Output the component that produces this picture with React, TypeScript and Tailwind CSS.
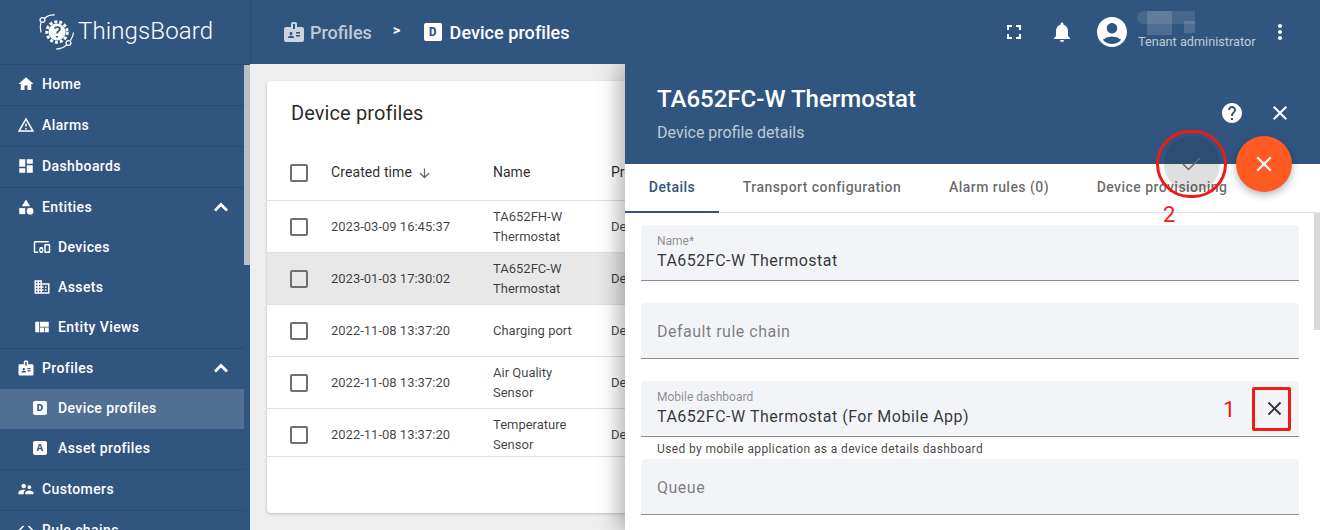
import React from "react";
import {
  MdHome, MdOutlineWarningAmber, MdDashboard, MdCategory, MdDevicesOther, MdDomain, MdViewQuilt, MdBadge,
  MdSupervisorAccount, MdCode, MdFullscreen, MdNotifications, MdAccountCircle, MdMoreVert,
  MdHelp, MdClose, MdArrowDownward,
} from "react-icons/md";

function LetterIcon({ letter, size = "w-[14px] h-[14px] text-[11px]" }: { letter: string; size?: string }) {
  return (
    <span className={`${size} bg-white rounded-[2px] flex items-center justify-center text-[#305680] font-bold leading-none font-['Liberation_Mono',monospace]`}>
      {letter}
    </span>
  );
}

function Logo() {
  return (
    <svg width="40" height="40" viewBox="0 0 40 40" className="shrink-0" fill="none">
      <circle cx="19" cy="20" r="8.5" fill="white" />
      <circle cx="19" cy="20" r="10.2" stroke="white" strokeWidth="3" strokeDasharray="3 2" />
      <path d="M16.500 16.500c1-2 5.500-2 5.500.5 0 2-3 2-3 4.500M19 24v1.500" stroke="#305680" strokeWidth="1.800" />
      <circle cx="4.500" cy="8" r="2.400" stroke="white" strokeWidth="1.300" />
      <path d="M6.500 6.500C9 4 13 2.800 17 3M3 10.500c-1 3 -1 6 0 10" stroke="white" strokeWidth="1.200" />
      <circle cx="30.500" cy="31" r="2.400" stroke="white" strokeWidth="1.300" />
      <path d="M28.500 33C25.500 35.800 22 37 18 37M32.500 28.500c1.500-2.500 2.800-4.500 3-8" stroke="white" strokeWidth="1.200" />
    </svg>
  );
}

function Chevron() {
  return (
    <svg width="16" height="10" viewBox="0 0 16 10" fill="none" className="mr-[15px]">
      <path d="M2 8.500l6-6 6 6" stroke="white" strokeWidth="2.800" />
    </svg>
  );
}

function NavRow({ icon, label, chevron, active, sub }: { icon: React.ReactNode; label: string; chevron?: boolean; active?: boolean; sub?: boolean }) {
  return (
    <div className={`flex items-center h-10 pb-[2px] shrink-0 text-white text-[14px] tracking-[0.4px] font-medium ${sub ? "pl-[33px]" : "pl-[17px]"} ${active ? "bg-[#4f7093]" : ""}`}>
      <span className="w-[25px] flex items-center shrink-0">{icon}</span>
      <span className="flex-1">{label}</span>
      {chevron && <Chevron />}
    </div>
  );
}

const Divider = () => <div className="h-px bg-[#2a4c72] shrink-0" />;

function Sidebar() {
  return (
    <aside className="w-[250px] h-[530px] shrink-0 bg-[#305680] flex flex-col overflow-hidden">
      <div className="h-[65px] shrink-0 border-b border-[#2a4c72] flex items-center pl-[38px]">
        <Logo />
        <span className="text-white text-[24px] font-light tracking-[0.12px] mt-[-2px]">ThingsBoard</span>
      </div>
      <div className="flex flex-1 min-h-0">
        <nav className="w-[244px] shrink-0 flex flex-col">
          <NavRow icon={<MdHome size={18} />} label="Home" />
          <Divider />
          <NavRow icon={<MdOutlineWarningAmber size={18} />} label="Alarms" />
          <Divider />
          <NavRow icon={<MdDashboard size={18} />} label="Dashboards" />
          <Divider />
          <NavRow icon={<MdCategory size={18} />} label="Entities" chevron />
          <NavRow sub icon={<MdDevicesOther size={18} />} label="Devices" />
          <NavRow sub icon={<MdDomain size={18} />} label="Assets" />
          <NavRow sub icon={<MdViewQuilt size={18} />} label="Entity Views" />
          <Divider />
          <NavRow icon={<MdBadge size={18} />} label="Profiles" chevron />
          <NavRow sub active icon={<LetterIcon letter="D" />} label="Device profiles" />
          <NavRow sub icon={<LetterIcon letter="A" />} label="Asset profiles" />
          <Divider />
          <NavRow icon={<MdSupervisorAccount size={18} />} label="Customers" />
          <Divider />
          <NavRow icon={<MdCode size={18} />} label="Rule chains" />
        </nav>
        <div className="w-[6px] shrink-0 bg-[#305680]">
          <div className="h-[200px] bg-[#b9bec4]" />
        </div>
      </div>
    </aside>
  );
}

function TopBar() {
  return (
    <header className="h-[64px] shrink-0 bg-[#305680] flex items-center text-white pl-[31px] border-l border-[#2a4c72]">
      <MdBadge size={24} className="text-white/75" />
      <span className="ml-[4px] text-[18px] font-medium text-white/70">Profiles</span>
      <span className="ml-[21px] mr-[23px] text-[15px] font-bold mt-[-3px]">&gt;</span>
      <LetterIcon letter="D" size="w-[18px] h-[18px] text-[13px]" />
      <span className="ml-[8px] text-[18px] font-medium tracking-[0.05px]">Device profiles</span>
      <div className="flex-1" />
      <MdFullscreen size={24} className="mr-[24px]" />
      <MdNotifications size={24} className="mr-[20px]" />
      <MdAccountCircle size={36} />
      <div className="relative w-[118px] ml-[8px] mr-[12px] h-[36px]">
        <div className="absolute left-[-1px] top-[-3px] h-[13px] w-[58px] rounded-l-full bg-white/10" />
        <div className="absolute left-[9px] top-[-3px] h-[24px] w-[25px] bg-white/15" />
        <div className="absolute left-[46px] top-[7px] h-[12px] w-[11px] bg-white/15" />
        <div className="absolute left-0 bottom-0 text-[12.7px] leading-[16px] whitespace-nowrap text-white/70">Tenant administrator</div>
      </div>
      <MdMoreVert size={24} className="mr-[28px]" />
    </header>
  );
}

const rows = [
  { time: "2023-03-09 16:45:37", name: ["TA652FH-W", "Thermostat"] },
  { time: "2023-01-03 17:30:02", name: ["TA652FC-W", "Thermostat"], sel: true },
  { time: "2022-11-08 13:37:20", name: ["Charging port"] },
  { time: "2022-11-08 13:37:20", name: ["Air Quality", "Sensor"] },
  { time: "2022-11-08 13:37:20", name: ["Temperature", "Sensor"], last: true },
];

const Checkbox = () => <span className="w-[18px] h-[18px] border-2 border-[#6f6f6f] rounded-[2px] shrink-0" />;

function Card() {
  return (
    <section className="h-[432px] bg-white rounded-[4px] shadow-[0_1px_3px_rgba(0,0,0,0.2)] flex flex-col">
      <div className="h-[64px] flex items-center pl-[24px] text-[20px] tracking-[0.1px] text-black/85">Device profiles</div>
      <div className="h-[56px] flex items-center pl-[23px] border-b border-[#e0e0e0] text-[14px] text-black/85">
        <Checkbox />
        <span className="ml-[23px] w-[162px] flex items-center gap-[5px]">
          <span className="tracking-[0.1px]">Created time</span> <MdArrowDownward size={15} className="text-black/60 mt-[2px]" />
        </span>
        <span className="w-[118px]">Name</span>
        <span>Profile</span>
      </div>
      {rows.map((r, i) => (
        <div key={i} className={`flex items-center pl-[23px] border-b border-[#e0e0e0] text-[13px] text-black/75 ${r.last ? "h-[48px] pt-[4px]" : "h-[52px] pt-[1px]"} ${r.sel ? "bg-[#e8e8e8]" : ""}`}>
          <Checkbox />
          <span className="ml-[23px] w-[162px]">{r.time}</span>
          <span className="w-[118px] leading-[20px]">
            {r.name.map((n) => (
              <span key={n} className="block">{n}</span>
            ))}
          </span>
          <span>Device</span>
        </div>
      ))}
    </section>
  );
}

function Field({ label, value, placeholder, hint, action }: { label?: string; value?: string; placeholder?: string; hint?: string; action?: React.ReactNode }) {
  return (
    <div className="shrink-0">
      <div className="h-[56px] bg-[#f3f4f8] rounded-t-[4px] border-b border-[#8e8e8e] flex items-center px-[16px] relative">
        {placeholder ? (
          <span className="text-[16px] tracking-[0.5px] text-black/50 mt-[3px]">{placeholder}</span>
        ) : (
          <div className="flex flex-col mt-[2px]">
            <span className="text-[12px] leading-[14px] text-black/45">{label}</span>
            <span className="text-[16px] leading-[24px] tracking-[0.5px] text-black/80 mt-[1px]">{value}</span>
          </div>
        )}
        {action}
      </div>
      {hint && <div className="text-[12px] leading-[20px] tracking-[0.38px] text-black/75 pl-[16px] pt-[2px]">{hint}</div>}
    </div>
  );
}

function Panel() {
  const tabs = [
    { t: "Details", w: "w-[94px]", active: true },
    { t: "Transport configuration", w: "w-[206px]" },
    { t: "Alarm rules (0)", w: "w-[148px]" },
    { t: "Device provisioning", w: "w-[178px]" },
  ];
  return (
    <div className="absolute left-[375px] top-0 w-[695px] h-[466px] bg-white shadow-[-6px_0_20px_rgba(0,0,0,0.3)] flex flex-col">
      <div className="h-[100px] shrink-0 bg-[#305680] pl-[32px] pt-[17px] relative">
        <div className="text-[24px] leading-[36px] font-medium text-white">TA652FC-W Thermostat</div>
        <div className="text-[16px] leading-[20px] mt-[6px] text-white/70">Device profile details</div>
        <MdHelp size={24} className="absolute left-[595px] top-[37px] text-white" />
        <MdClose size={24} className="absolute left-[643px] top-[37px] text-white" />
      </div>
      <div className="h-[49px] shrink-0 border-b border-[#e0e0e0] flex">
        {tabs.map((t) => (
          <div key={t.t} className={`${t.w} h-[49px] pb-px flex items-center justify-center text-[14px] font-medium tracking-[0.45px] border-b-2 ${t.active ? "text-[#305680] border-[#305680]" : "text-black/60 border-transparent"}`}>
            {t.t}
          </div>
        ))}
      </div>
      <div className="flex-1 min-h-0 flex overflow-hidden">
        <div className="flex-1 pl-[16px] pr-[15px] pt-[12px] flex flex-col gap-[22px]">
          <Field label="Name*" value="TA652FC-W Thermostat" />
          <Field placeholder="Default rule chain" />
          <div className="flex flex-col">
            <Field
              label="Mobile dashboard"
              value="TA652FC-W Thermostat (For Mobile App)"
              hint="Used by mobile application as a device details dashboard"
              action={<MdClose size={23} className="absolute right-[13px] top-[16px] text-black/80" />}
            />
            <Field placeholder="Queue" />
          </div>
        </div>
        <div className="w-[6px] shrink-0">
          <div className="h-[117px] bg-[#d9d9d9]" />
        </div>
      </div>
    </div>
  );
}

function Annotations() {
  return (
    <>
      <div className="absolute left-[914px] top-[72px] w-[56px] h-[56px] rounded-full bg-[rgba(30,30,30,0.14)] flex items-center justify-center">
        <svg width="22" height="18" viewBox="0 0 22 18" fill="none">
          <path d="M2 9l5.500 5.500L19 3" stroke="#6b6b6b" strokeWidth="1.500" />
        </svg>
      </div>
      <div className="absolute left-[986px] top-[72px] w-[56px] h-[56px] rounded-full bg-[#ff5a22] shadow-[0_3px_8px_rgba(0,0,0,0.3)] flex items-center justify-center">
        <MdClose size={26} className="text-white" />
      </div>
      <div className="absolute left-[906px] top-[66px] w-[71px] h-[68px] rounded-full border-[3px] border-[#f01a12]" />
      <div className="absolute left-[913px] top-[139px] text-[22px] leading-[24px] text-[#f01a12]">2</div>
      <div className="absolute left-[1002px] top-[323px] w-[39px] h-[44px] rounded-[2px] border-[3px] border-[#f01a12]" />
      <div className="absolute left-[973px] top-[334px] text-[22px] leading-[24px] text-[#f01a12]">1</div>
    </>
  );
}

export default function App() {
  return (
    <div className="w-[1320px] h-[530px] flex overflow-hidden bg-[#eeeeee] font-['Roboto',sans-serif]">
      <Sidebar />
      <div className="flex-1 min-w-0 flex flex-col">
        <TopBar />
        <main className="flex-1 min-h-0 relative overflow-hidden pl-[17px] pr-[16px] pt-[17px]">
          <Card />
          <Panel />
          <Annotations />
        </main>
      </div>
    </div>
  );
}
